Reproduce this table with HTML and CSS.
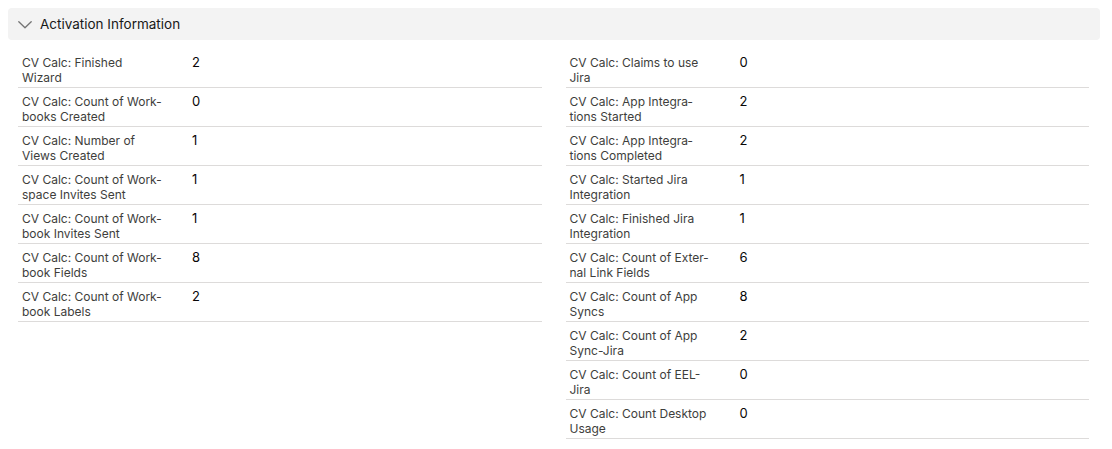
FILE: index.html
```html
<!DOCTYPE html>
<html lang="en">
<head>
<meta charset="utf-8">
<title>Activation Information</title>
<link rel="stylesheet" href="styles.css">
</head>
<body>
<section class="section">
  <h3 class="section-header">
    <svg class="chevron" width="14" height="8" viewBox="0 0 14 8" aria-hidden="true"><path d="M0.8 0.8 L7 6.8 L13.2 0.8" fill="none" stroke="#747474" stroke-width="1.3" stroke-linecap="round" stroke-linejoin="round"/></svg>
    <span class="section-title">Activation Information</span>
  </h3>
  <div class="section-body">
    <div class="column">
      <div class="field"><div class="label">CV Calc: Finished Wizard</div><div class="value">2</div></div>
      <div class="field"><div class="label">CV Calc: Count of Work&shy;books Created</div><div class="value">0</div></div>
      <div class="field"><div class="label">CV Calc: Number of Views Created</div><div class="value">1</div></div>
      <div class="field"><div class="label">CV Calc: Count of Work&shy;space Invites Sent</div><div class="value">1</div></div>
      <div class="field"><div class="label">CV Calc: Count of Work&shy;book Invites Sent</div><div class="value">1</div></div>
      <div class="field"><div class="label">CV Calc: Count of Work&shy;book Fields</div><div class="value">8</div></div>
      <div class="field"><div class="label">CV Calc: Count of Work&shy;book Labels</div><div class="value">2</div></div>
    </div>
    <div class="column">
      <div class="field"><div class="label">CV Calc: Claims to use Jira</div><div class="value">0</div></div>
      <div class="field"><div class="label">CV Calc: App Integra&shy;tions Started</div><div class="value">2</div></div>
      <div class="field"><div class="label">CV Calc: App Integra&shy;tions Completed</div><div class="value">2</div></div>
      <div class="field"><div class="label">CV Calc: Started Jira Integration</div><div class="value">1</div></div>
      <div class="field"><div class="label">CV Calc: Finished Jira Integration</div><div class="value">1</div></div>
      <div class="field"><div class="label">CV Calc: Count of Exter&shy;nal Link Fields</div><div class="value">6</div></div>
      <div class="field"><div class="label">CV Calc: Count of App Syncs</div><div class="value">8</div></div>
      <div class="field"><div class="label">CV Calc: Count of App Sync-Jira</div><div class="value">2</div></div>
      <div class="field"><div class="label">CV Calc: Count of EEL-Jira</div><div class="value">0</div></div>
      <div class="field"><div class="label">CV Calc: Count Desktop Usage</div><div class="value">0</div></div>
    </div>
  </div>
</section>
</body>
</html>
```

FILE: styles.css
```css
html, body {
  margin: 0;
  padding: 0;
  background: #ffffff;
}

body {
  padding: 8px 12px 8px 8px;
  font-family: Inter, "Noto Sans", "Liberation Sans", sans-serif;
  color: #181818;
}

.section-header {
  display: flex;
  align-items: center;
  height: 32px;
  margin: 0;
  padding: 0 10px;
  background: #f3f3f3;
  border-radius: 4px;
  font-weight: 400;
  font-size: 13.5px;
  color: #181818;
}

.chevron {
  display: block;
  margin-right: 8px;
  margin-top: 1px;
}

.section-body {
  display: grid;
  grid-template-columns: 1fr 1fr;
  column-gap: 24px;
  padding: 9px 11px 0 10px;
}

.column {
  display: flex;
  flex-direction: column;
}

.field {
  display: flex;
  align-items: flex-start;
  padding: 6px 4px 2px;
  border-bottom: 1px solid #dddbda;
}

.label {
  flex: 0 0 170px;
  box-sizing: border-box;
  padding-right: 29px;
  font-size: 12px;
  line-height: 15px;
  color: #3e3e3c;
  hyphens: manual;
  min-height: 30px;
}

.value {
  flex: 1;
  font-size: 13px;
  line-height: 15px;
  color: #080707;
}
```
